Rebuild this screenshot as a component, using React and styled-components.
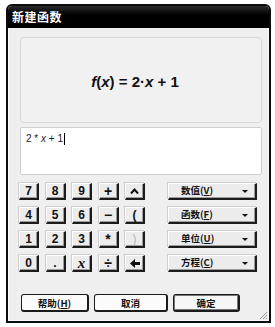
import styled, { createGlobalStyle } from "styled-components";

const GlobalStyle = createGlobalStyle`
  html, body {
    margin: 0;
    padding: 0;
    background: #ffffff;
  }
  body {
    font-family: "Liberation Sans", "Noto Sans CJK SC", sans-serif;
  }
`;

const BackArrow = () => (
  <svg width="10" height="9" viewBox="0 0 10 9">
    <path d="M0 4.5 L5 0 L5 3 L10 3 L10 6 L5 6 L5 9 Z" fill="#111" />
  </svg>
);

const Caret = () => (
  <svg width="9" height="6" viewBox="0 0 9 6">
    <path d="M1 5.5 L4.5 1.5 L8 5.5" fill="none" stroke="#111" strokeWidth="2" />
  </svg>
);

const keys = [
  ["7", "8", "9", "+", "caret"],
  ["4", "5", "6", "−", "("],
  ["1", "2", "3", "*", ")"],
  ["0", ".", "x", "÷", "back"],
];

const operators = ["+", "−", "*", "÷"];

const menus = [
  { label: "数值", key: "V" },
  { label: "函数", key: "F" },
  { label: "单位", key: "U" },
  { label: "方程", key: "C" },
];

function keyFace(k) {
  if (k === "caret") return <Caret />;
  if (k === "back") return <BackArrow />;
  return k;
}

export default function App() {
  return (
    <>
      <GlobalStyle />
      <Window>
        <TitleBar>新建函数</TitleBar>
        <Client>
          <Display>
            <Formula>
              <i>f</i>(<i>x</i>) = 2·<i>x</i> + 1
            </Formula>
          </Display>
          <Input>
            2 * <i>x</i> + 1<TextCursor />
          </Input>
          <Pad>
            <Keys>
              {keys.flat().map((k, i) => (
                <Key
                  key={i}
                  $disabled={k === ")"}
                  $script={k === "x"}
                  $op={operators.includes(k)}
                >
                  {keyFace(k)}
                </Key>
              ))}
            </Keys>
            <Menus>
              {menus.map((m) => (
                <MenuButton key={m.key}>
                  <MenuLabel>
                    {m.label}(<u>{m.key}</u>)
                  </MenuLabel>
                  <Arrow />
                </MenuButton>
              ))}
            </Menus>
          </Pad>
          <Footer>
            <DialogButton $w={68}>
              帮助(<u>H</u>)
            </DialogButton>
            <DialogButton $w={74}>取消</DialogButton>
            <DialogButton $w={67} $default>
              确定
            </DialogButton>
          </Footer>
          <Grip>
            <svg width="8" height="8" viewBox="0 0 8 8">
              <path d="M1 8 L8 1 M4 8 L8 4 M7 8 L8 7" stroke="#9a9a9a" strokeWidth="1" />
            </svg>
          </Grip>
        </Client>
      </Window>
    </>
  );
}

const Window = styled.div`
  position: relative;
  margin: 4px 0 0 6px;
  width: 261px;
  height: 315px;
  border: 2px solid #0c0c0c;
  border-radius: 6px 6px 0 0;
  background: #efefef;
  display: flex;
  flex-direction: column;
  overflow: hidden;
`;

const TitleBar = styled.div`
  height: 22px;
  flex: none;
  background: linear-gradient(#2a2a2a, #000 40%, #000);
  color: #fff;
  font-family: "Noto Sans CJK SC", sans-serif;
  font-weight: 700;
  font-size: 12px;
  line-height: 22px;
  padding-left: 4px;
  letter-spacing: 0.5px;
`;

const Client = styled.div`
  position: relative;
  flex: 1;
  display: flex;
  flex-direction: column;
  padding: 9px 6px 0 11px;
  border: 1px solid #fafafa;
  border-top: none;
`;

const Display = styled.div`
  box-sizing: border-box;
  height: 86px;
  border: 1px solid #d8d8d8;
  border-radius: 4px;
  background: #f1f1f1;
  display: flex;
  align-items: center;
  justify-content: center;
  padding: 2px 12px 0 0;
`;

const Formula = styled.div`
  font-family: "Liberation Sans", sans-serif;
  font-weight: 700;
  font-size: 15px;
  color: #111;
`;

const Input = styled.div`
  box-sizing: border-box;
  margin-top: 4px;
  height: 48px;
  border: 1px solid #cfcfcf;
  border-radius: 2px;
  background: #fff;
  padding: 5px 5px;
  font-family: "Liberation Sans", sans-serif;
  font-size: 10px;
  color: #222;
  display: flex;
  align-items: flex-start;
  white-space: pre;
`;

const TextCursor = styled.span`
  display: inline-block;
  width: 1px;
  height: 12px;
  margin-left: 1px;
  background: #000;
`;

const Pad = styled.div`
  margin-top: 8px;
  display: flex;
  justify-content: space-between;
  padding-right: 5px;
`;

const Keys = styled.div`
  display: grid;
  grid-template-columns: repeat(5, 20px);
  grid-auto-rows: 17px;
  column-gap: 6.5px;
  row-gap: 7px;
  margin-left: -1px;
`;

const Key = styled.div`
  box-sizing: border-box;
  border-top: 1px solid #fff;
  border-left: 1px solid #fff;
  border-right: 2px solid #1c1c1c;
  border-bottom: 2px solid #1c1c1c;
  box-shadow: inset -1px -1px 0 #9c9c9c, -1px -1px 0 #cfcfcf;
  background: #ececec;
  display: flex;
  align-items: center;
  justify-content: center;
  font-family: ${(p) => (p.$script ? '"Liberation Serif", serif' : '"Liberation Sans", sans-serif')};
  font-style: ${(p) => (p.$script ? "italic" : "normal")};
  font-size: ${(p) => (p.$script ? "15px" : p.$op ? "14px" : "12px")};
  color: ${(p) => (p.$disabled ? "#b4b4b4" : "#111")};
  font-weight: ${(p) => (p.$disabled ? 400 : 700)};
`;

const Menus = styled.div`
  display: flex;
  flex-direction: column;
  gap: 7px;
`;

const MenuButton = styled.div`
  position: relative;
  box-sizing: border-box;
  width: 89px;
  height: 17px;
  border-top: 1px solid #fff;
  border-left: 1px solid #fff;
  border-right: 2px solid #1c1c1c;
  border-bottom: 2px solid #1c1c1c;
  box-shadow: inset -1px -1px 0 #9c9c9c, -1px -1px 0 #cfcfcf;
  background: #ececec;
  display: flex;
  align-items: center;
  padding-left: 12px;
`;

const MenuLabel = styled.span`
  font-family: "Noto Sans CJK SC", sans-serif;
  font-weight: 700;
  font-size: 9.5px;
  color: #111;
  line-height: 1;
`;

const Arrow = styled.span`
  position: absolute;
  right: 7px;
  top: 6px;
  width: 0;
  height: 0;
  border-left: 3px solid transparent;
  border-right: 3px solid transparent;
  border-top: 3px solid #111;
`;

const Footer = styled.div`
  margin-top: 22px;
  display: flex;
  gap: 5px;
  margin-left: 1px;
`;

const DialogButton = styled.div`
  box-sizing: border-box;
  width: ${(p) => p.$w}px;
  height: 18px;
  border: 1px solid #1a1a1a;
  border-right-width: 2px;
  border-bottom-width: 2px;
  border-radius: 3px;
  background: ${(p) => (p.$default ? "#f6f6f6" : "#fbfbfb")};
  box-shadow: ${(p) => (p.$default ? "inset 0 0 0 1px #777" : "none")};
  display: flex;
  align-items: center;
  justify-content: center;
  font-family: "Noto Sans CJK SC", sans-serif;
  font-weight: 700;
  font-size: 9.5px;
  color: #111;
`;

const Grip = styled.div`
  position: absolute;
  right: 1px;
  bottom: 1px;
  line-height: 0;
`;
